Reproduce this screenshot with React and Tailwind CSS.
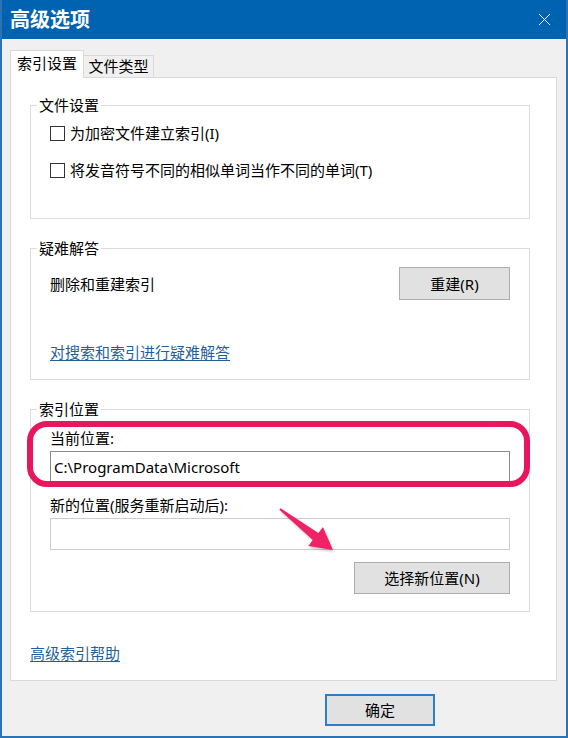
import { X } from 'lucide-react';

function GroupBox({ title, className, children }) {
    return (
        <fieldset className={`w-[500px] border border-[#dcdcdc] ${className}`}>
            <legend className="ml-[6px] px-[2px] text-[15px] leading-[20px]">{title}</legend>
            <div className="px-[19px]">{children}</div>
        </fieldset>
    );
}

function Checkbox({ label, className = '' }) {
    return (
        <label className={`flex h-[20px] items-center gap-[5px] text-[15px] ${className}`}>
            <span className="h-[15px] w-[15px] border border-[#333333] bg-white" />
            <span>{label}</span>
        </label>
    );
}

function Button({ children, className = '' }) {
    return (
        <button
            className={`flex items-center justify-center border border-[#adadad] bg-[#e1e1e1] text-[15px] leading-[20px] text-black ${className}`}
        >
            {children}
        </button>
    );
}

function TextBox({ value, className = '' }) {
    return (
        <div className={`flex h-[32px] items-center bg-white pl-[3px] text-[15px] ${className}`}>
            {value}
        </div>
    );
}

export default function App() {
    return (
        <div className="flex h-[738px] w-[568px] flex-col overflow-hidden border-2 border-t-0 border-[#2a74b6] bg-[#f0f0f0] font-['Noto_Sans','Noto_Sans_CJK_SC',sans-serif] text-black">
            {/* title bar */}
            <div className="flex h-[39px] shrink-0 items-center justify-between bg-[#0063b1] pl-[8px] pr-[11px]">
                <span className="text-[20px] font-bold leading-[24px] text-white">高级选项</span>
                <X size={21} strokeWidth={1.1} className="text-white" />
            </div>

            {/* tabs */}
            <div className="relative z-10 ml-[8px] mt-[11px] -mb-px flex items-end">
                <div className="flex h-[28px] w-[74px] items-start justify-center border border-b-0 border-[#d9d9d9] bg-white pt-[2px] text-[15px] leading-[20px]">
                    索引设置
                </div>
                <div className="flex h-[23px] w-[70px] items-start justify-center border border-l-0 border-[#d9d9d9] bg-[#f0f0f0] text-[15px] leading-[20px]">
                    文件类型
                </div>
            </div>

            {/* tab panel */}
            <div className="ml-[8px] flex h-[604px] w-[547px] shrink-0 flex-col border border-[#d9d9d9] bg-white pl-[19px] pt-[17px]">
                <GroupBox title="文件设置" className="h-[124px]">
                    <Checkbox label="为加密文件建立索引(I)" className="mt-[8px]" />
                    <Checkbox label="将发音符号不同的相似单词当作不同的单词(T)" className="mt-[17px]" />
                </GroupBox>

                <GroupBox title="疑难解答" className="mt-[19px] h-[142px]">
                    <div className="flex items-center justify-between pt-[9px]">
                        <span className="text-[15px] leading-[20px]">删除和重建索引</span>
                        <Button className="h-[33px] w-[111px]">重建(R)</Button>
                    </div>
                    <a className="mt-[42px] block text-[15px] leading-[20px] text-[#1f5f9a] underline underline-offset-2">
                        对搜索和索引进行疑难解答
                    </a>
                </GroupBox>

                <GroupBox title="索引位置" className="mt-[19px] h-[213px]">
                    <div className="flex flex-col">
                        <div className="relative pt-[9px]">
                            <div className="text-[15px] leading-[20px]">当前位置:</div>
                            <TextBox value="C:\ProgramData\Microsoft" className="mt-[3px] border border-[#8a8a8a]" />
                            {/* highlight ring around the current location */}
                            <div className="pointer-events-none absolute -bottom-[4px] -left-[23px] -right-[20px] top-[2px] rounded-[20px] border-[6px] border-[#e8175d]" />
                        </div>
                        <div className="relative mt-[12px]">
                            <div className="text-[15px] leading-[20px]">新的位置(服务重新启动后):</div>
                            <TextBox value="" className="mt-[3px] border border-[#cccccc]" />
                            <svg
                                className="pointer-events-none absolute left-[225px] top-[5px] drop-shadow-[1px_2px_1px_rgba(0,0,0,0.2)]"
                                width="64"
                                height="56"
                                viewBox="0 0 64 56"
                            >
                                <polygon
                                    points="5.6,8.2 43.4,32.9 47.9,27 58,50 33.3,46 37.8,40.1 4.4,9.8"
                                    fill="#ef2266"
                                />
                            </svg>
                        </div>
                        <Button className="mt-[12px] h-[32px] w-[156px] self-end">选择新位置(N)</Button>
                    </div>
                </GroupBox>

                <a className="mt-[31px] block text-[15px] leading-[20px] text-[#1f5f9a] underline underline-offset-2">
                    高级索引帮助
                </a>
            </div>

            {/* footer */}
            <div className="mt-[13px] flex justify-end pr-[131px]">
                <button className="flex h-[32px] w-[110px] items-center justify-center border-2 border-[#2f7fc7] bg-[#e1e1e1] text-[15px] leading-[20px]">
                    确定
                </button>
            </div>
        </div>
    );
}
